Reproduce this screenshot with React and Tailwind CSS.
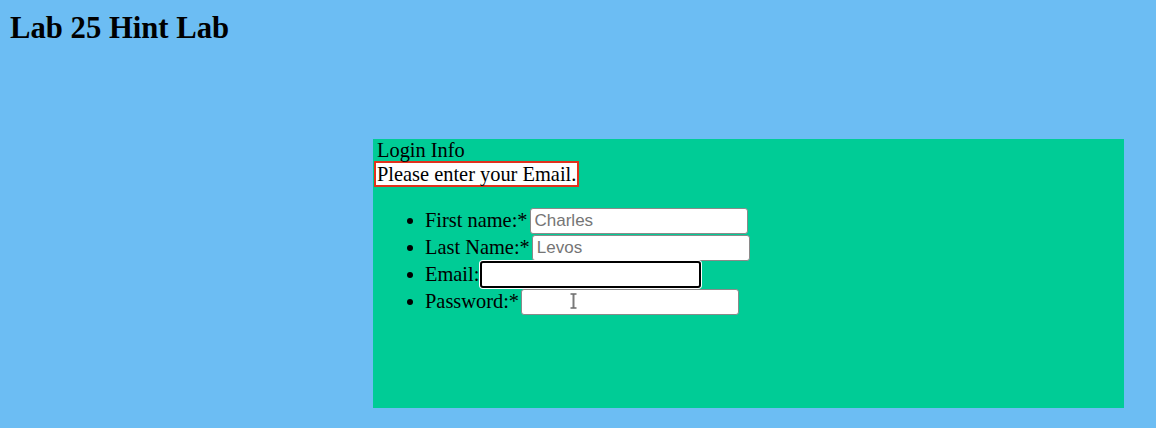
export default function App() {
  const serif = { fontFamily: '"Liberation Serif", "Times New Roman", serif' };
  const sans = '"Liberation Sans", Arial, sans-serif';
  const Row = ({ label, children }) => (
    <li className="flex h-[27px] items-center">
      <span className="ml-[33px] mr-[12px] h-[6px] w-[6px] rounded-full bg-black" />
      <span className="leading-[23px] whitespace-pre">{label}</span>
      {children}
    </li>
  );
  const inputCls =
    "ml-[2px] box-border h-[26px] w-[218px] rounded-[3px] border border-[#8a8a8a] bg-white px-[4px] text-[17px] text-black outline-none placeholder:text-[#757575]";
  return (
    <div className="min-h-[428px] w-full bg-[#6cbdf3] px-[10px] pt-[12px]" style={serif}>
      <h2 className="m-0 text-[30.7px] font-bold leading-[33px] text-black">Lab 25 Hint Lab</h2>
      <div className="relative ml-[363px] mt-[94px] h-[269px] w-[751px] bg-[#00cc96] pl-px text-[20.4px] text-black">
        <div className="pl-[3px] leading-[22px]">Login Info</div>
        <div className="w-fit border-2 border-[#e2321d] bg-white px-px leading-[22px]">
          Please enter your Email.
        </div>
        <ul className="mt-[20px] list-none p-0">
          <Row label="First name:*">
            <input className={inputCls} style={{ fontFamily: sans }} placeholder="Charles" />
          </Row>
          <Row label="Last Name:*">
            <input className={inputCls} style={{ fontFamily: sans }} placeholder="Levos" />
          </Row>
          <Row label="Email:">
            <input
              className="ml-[1px] box-border h-[27px] w-[221px] rounded-[3px] border-2 border-black bg-white ring-1 ring-white outline-none"
              style={{ fontFamily: sans }}
            />
          </Row>
          <Row label="Password:*">
            <input className={inputCls} type="password" style={{ fontFamily: sans }} />
          </Row>
        </ul>
        <svg
          className="absolute left-[197px] top-[154px]"
          width="7"
          height="16"
          viewBox="0 0 7 16"
        >
          <path d="M3.5 1.5v13" fill="none" stroke="#7a7a7a" strokeWidth="2" />
          <path d="M0.5 1h6M0.5 15h6" fill="none" stroke="#222" strokeWidth="1.2" />
        </svg>
      </div>
    </div>
  );
}
